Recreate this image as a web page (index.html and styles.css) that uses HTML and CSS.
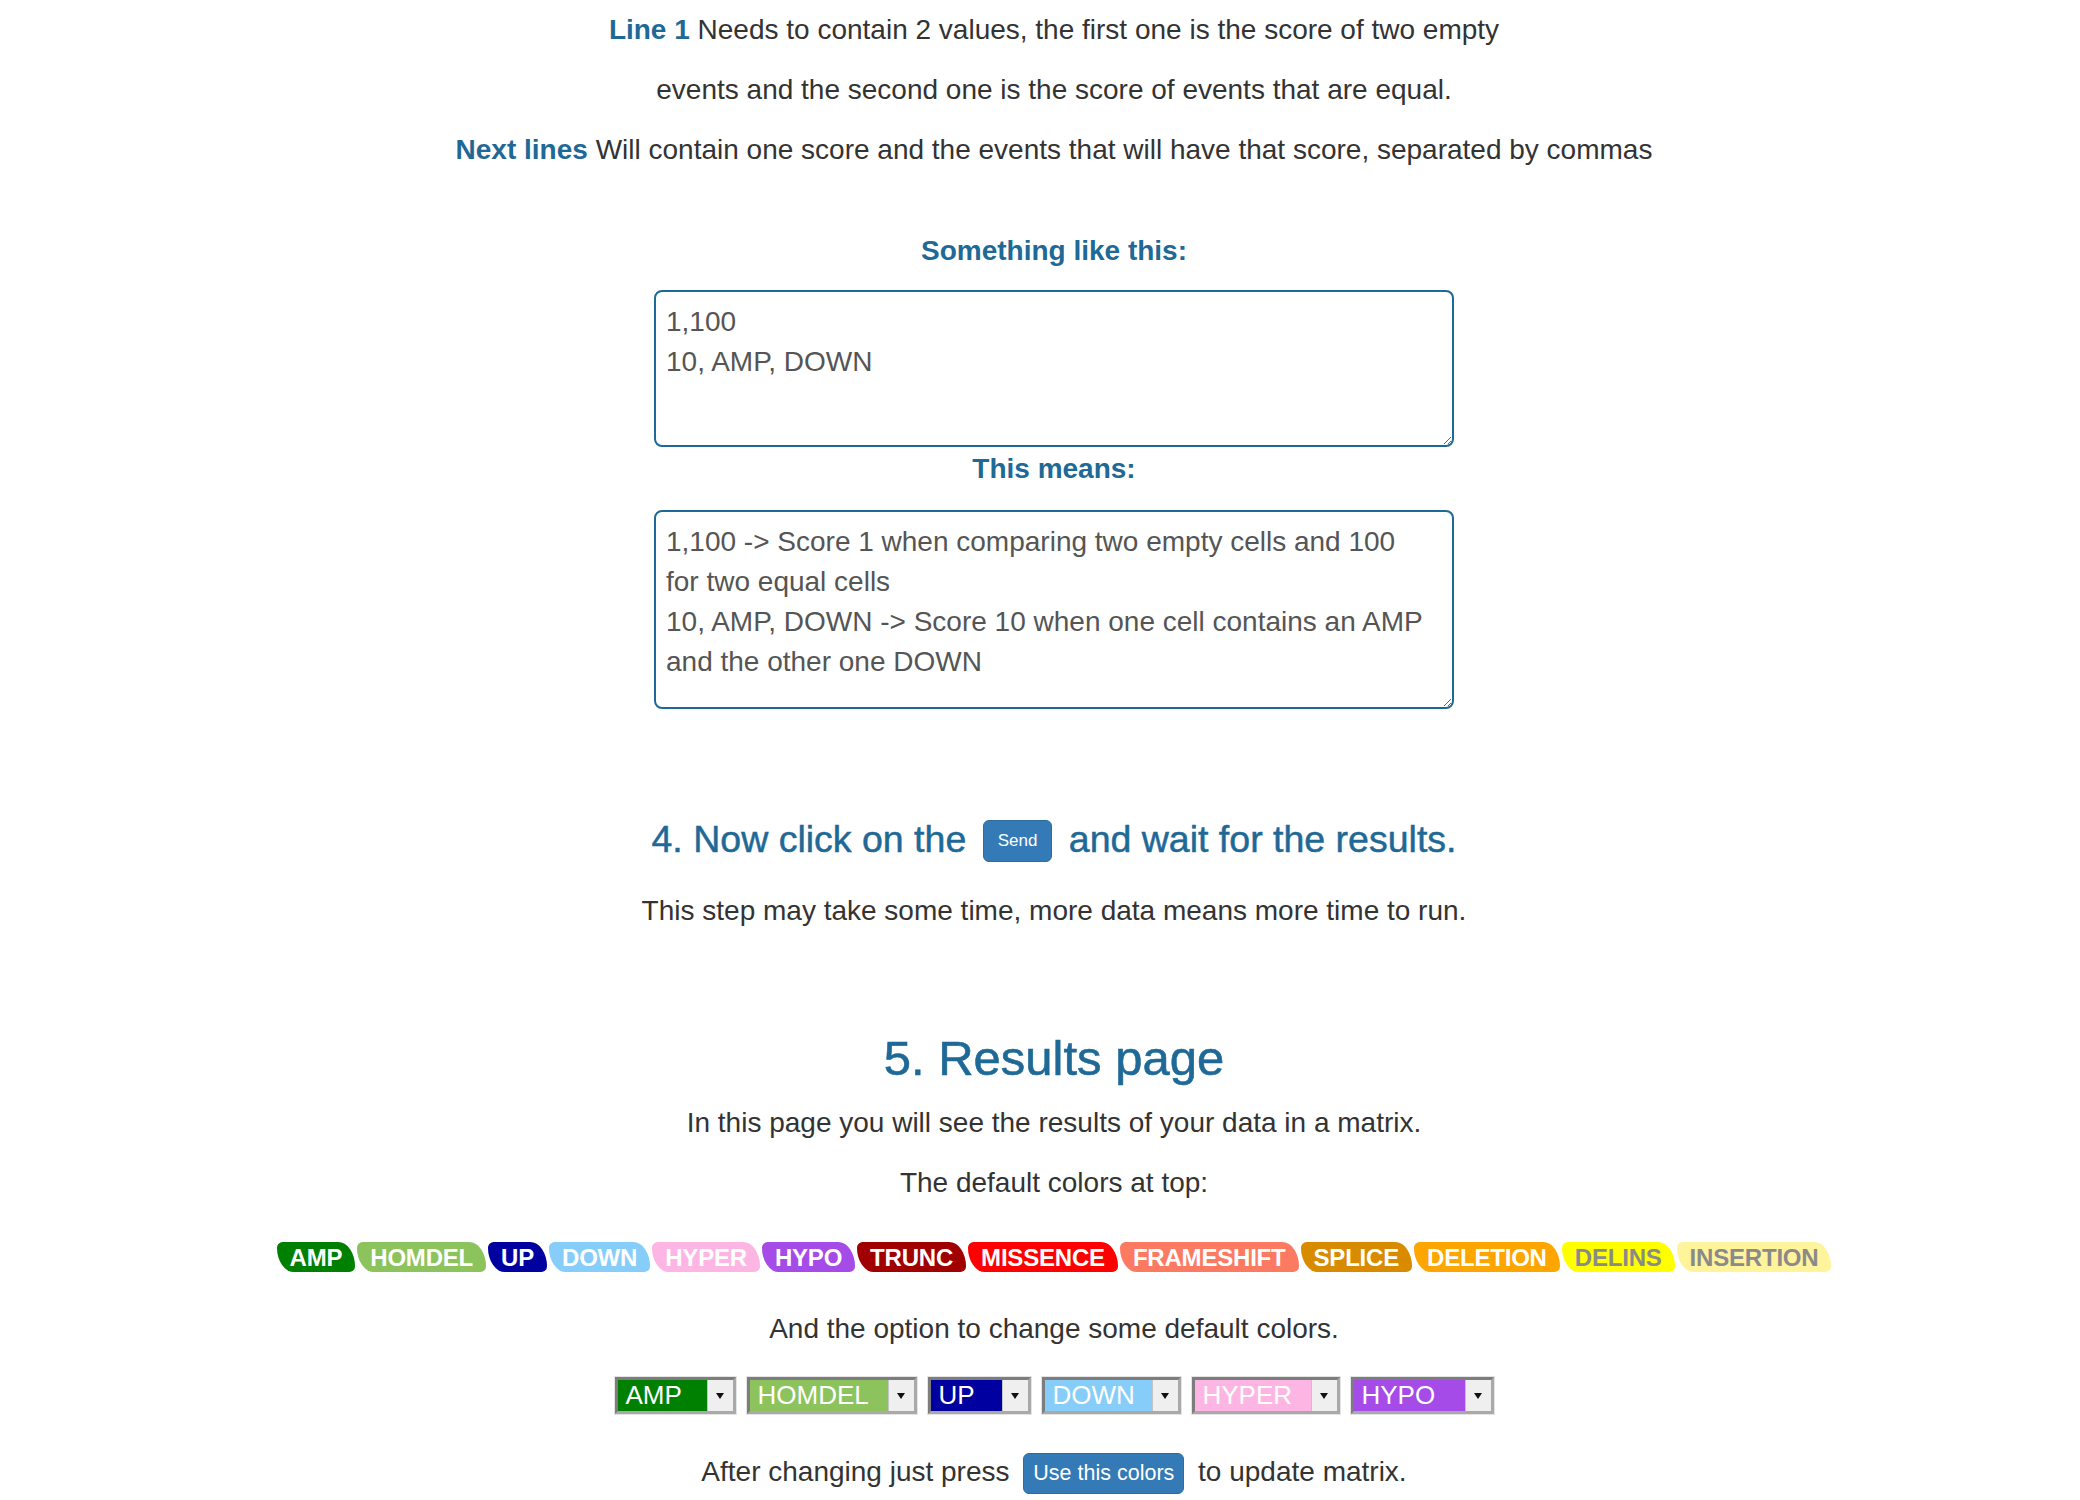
FILE: index.html
```html
<!DOCTYPE html>
<html lang="en">
<head>
<meta charset="utf-8">
<title>Results help</title>
<link rel="stylesheet" href="styles.css">
</head>
<body>
<div class="page">
  <p class="intro narrow"><span class="key">Line 1</span> Needs to contain 2 values, the first one is the score of two empty events and the second one is the score of events that are equal.</p>
  <p class="intro"><span class="key">Next lines</span> Will contain one score and the events that will have that score, separated by commas</p>

  <div class="label first">Something like this:</div>
  <textarea class="box box-short">1,100
10, AMP, DOWN</textarea>

  <div class="label">This means:</div>
  <textarea class="box box-tall">1,100 -&gt; Score 1 when comparing two empty cells and 100
for two equal cells
10, AMP, DOWN -&gt; Score 10 when one cell contains an AMP
and the other one DOWN</textarea>

  <h3 class="step-title">4. Now click on the <span class="btn btn-send">Send</span> and wait for the results.</h3>
  <p class="text step-note">This step may take some time, more data means more time to run.</p>

  <h2 class="results-title">5. Results page</h2>
  <p class="text tight">In this page you will see the results of your data in a matrix.</p>
  <p class="text">The default colors at top:</p>

  <div class="legend">
    <span class="badge c-amp">AMP</span>
    <span class="badge c-homdel">HOMDEL</span>
    <span class="badge c-up">UP</span>
    <span class="badge c-down">DOWN</span>
    <span class="badge c-hyper">HYPER</span>
    <span class="badge c-hypo">HYPO</span>
    <span class="badge c-trunc">TRUNC</span>
    <span class="badge c-missence">MISSENCE</span>
    <span class="badge c-frameshift">FRAMESHIFT</span>
    <span class="badge c-splice">SPLICE</span>
    <span class="badge c-deletion">DELETION</span>
    <span class="badge c-delins">DELINS</span>
    <span class="badge c-insertion">INSERTION</span>
  </div>

  <p class="text option-note">And the option to change some default colors.</p>

  <div class="pickers">
    <div class="picker w-amp"><span class="picker-value c-amp">AMP</span><span class="picker-arrow"><span class="tri"></span></span></div>
    <div class="picker w-homdel"><span class="picker-value c-homdel">HOMDEL</span><span class="picker-arrow"><span class="tri"></span></span></div>
    <div class="picker w-up"><span class="picker-value c-up">UP</span><span class="picker-arrow"><span class="tri"></span></span></div>
    <div class="picker w-down"><span class="picker-value c-down">DOWN</span><span class="picker-arrow"><span class="tri"></span></span></div>
    <div class="picker w-hyper"><span class="picker-value c-hyper">HYPER</span><span class="picker-arrow"><span class="tri"></span></span></div>
    <div class="picker w-hypo"><span class="picker-value c-hypo">HYPO</span><span class="picker-arrow"><span class="tri"></span></span></div>
  </div>

  <p class="text after-note">After changing just press <span class="btn btn-colors">Use this colors</span> to update matrix.</p>
</div>
</body>
</html>
```

FILE: styles.css
```css
html, body {
  margin: 0;
  padding: 0;
  background: #ffffff;
  overflow: hidden;
}

body {
  font-family: "Liberation Sans", Arial, Helvetica, sans-serif;
  font-size: 28px;
  color: #333333;
}

.page {
  padding-left: 28px;
  text-align: center;
}

.intro {
  margin: 0 auto;
  line-height: 60px;
}

.narrow {
  max-width: 940px;
}

.key {
  font-weight: bold;
  color: #1f6996;
}

.label {
  font-weight: bold;
  color: #1f6996;
  line-height: 40px;
  margin: 2px 0 21px;
}

.label.first {
  margin-top: 51px;
  margin-bottom: 19px;
}

.box {
  display: block;
  box-sizing: border-box;
  width: 800px;
  margin: 0 auto;
  padding: 10px;
  border: 2px solid #1f6996;
  border-radius: 8px;
  font-family: "Liberation Sans", Arial, Helvetica, sans-serif;
  font-size: 28px;
  line-height: 40px;
  color: #555555;
  background: #ffffff;
  overflow: hidden;
  text-align: left;
}

.box-short {
  height: 157px;
}

.box-tall {
  height: 199px;
}

.step-title {
  margin: 103px 0 0;
  font-size: 37.5px;
  line-height: 54px;
  font-weight: normal;
  color: #1f6996;
  -webkit-text-stroke: 0.5px #1f6996;
}

.btn {
  display: inline-block;
  vertical-align: middle;
  background: #337ab7;
  border: 1px solid #2e6da4;
  color: #ffffff;
  border-radius: 6px;
  -webkit-text-stroke: 0;
  font-weight: normal;
}

.btn-send {
  font-size: 17px;
  line-height: 40px;
  padding: 0 14px;
  margin: -2px 6px 0;
}

.btn-colors {
  font-size: 21.5px;
  line-height: 39px;
  padding: 0 9px;
  margin: 0 6px;
}

.text {
  margin: 0;
  line-height: 60px;
}

.step-note {
  margin-top: 15px;
}

.results-title {
  margin: 87px 0 0;
  font-size: 49px;
  line-height: 60px;
  font-weight: normal;
  color: #1f6996;
  -webkit-text-stroke: 0.6px #1f6996;
}

.tight {
  margin-top: 5px;
}

.legend {
  display: flex;
  justify-content: center;
  gap: 2px;
  margin-top: 29px;
}

.badge {
  display: block;
  height: 30px;
  line-height: 31px;
  padding: 0 13px;
  font-size: 24px;
  font-weight: bold;
  color: #ffffff;
  border-radius: 6px 18px 6px 18px / 6px 26px 6px 26px;
  letter-spacing: -0.2px;
}

.c-amp { background: #008000; }
.c-homdel { background: #8cc35c; }
.c-up { background: #0000a0; }
.c-down { background: #87cdf9; }
.c-hyper { background: #fdb6e3; }
.c-hypo { background: #a54be8; }
.c-trunc { background: #a00000; }
.c-missence { background: #ff0000; }
.c-frameshift { background: #fd7a62; }
.c-splice { background: #d98b00; }
.c-deletion { background: #ffa500; }
.c-delins { background: #ffff00; color: #8a8a8a; }
.c-insertion { background: #fff39c; color: #8a8a8a; }

.option-note {
  margin-top: 27px;
}

.pickers {
  display: flex;
  justify-content: center;
  gap: 11px;
  margin-top: 18px;
}

.picker {
  display: flex;
  box-sizing: border-box;
  height: 37px;
  border: 3px solid;
  border-color: #7d7d7d #a9a9a9 #a9a9a9 #7d7d7d;
  box-shadow: 0 0 0 1px #e4e4e4;
  background: #f0f0f0;
  text-align: left;
}

.picker-value {
  flex: 1;
  padding-left: 8px;
  font-size: 26px;
  line-height: 31px;
  color: #ffffff;
  white-space: nowrap;
  overflow: hidden;
}

.picker-arrow {
  width: 25px;
  display: flex;
  align-items: center;
  justify-content: center;
  background: #efefef;
  border-left: 1px solid #c4c4c4;
}

.tri {
  width: 0;
  height: 0;
  border-left: 4px solid transparent;
  border-right: 4px solid transparent;
  border-top: 6px solid #111111;
}

.w-amp { width: 121px; }
.w-homdel { width: 170px; }
.w-up { width: 103px; }
.w-down { width: 139px; }
.w-hyper { width: 148px; }
.w-hypo { width: 143px; }

.after-note {
  margin-top: 28px;
}
```
